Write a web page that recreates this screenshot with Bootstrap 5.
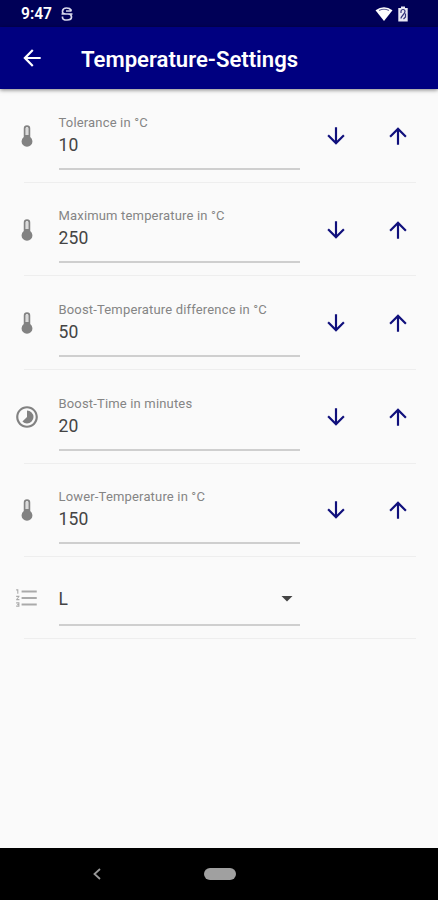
<!DOCTYPE html>
<html lang="en">
<head>
<meta charset="utf-8">
<meta name="viewport" content="width=device-width, initial-scale=1">
<title>Temperature-Settings</title>
<link href="https://cdn.jsdelivr.net/npm/bootstrap@5.3.0/dist/css/bootstrap.min.css" rel="stylesheet">
<style>
body{font-family:Roboto,sans-serif;background:#fafafa;height:900px;overflow:hidden}
svg{display:block;flex:none}
.status{height:27px;background:#000057;padding:0 29px 0 21px}
.clock{font-size:15.6px;font-weight:600;line-height:27px;width:31px;white-space:nowrap;padding-top:1px}
.appbar{height:62px;background:#000080;padding:0 19px;box-shadow:0 1px 4px rgba(0,0,0,.5);z-index:1}
.title{font-size:22.1px;font-weight:600;line-height:28px;margin-left:36px;padding-top:2px;white-space:nowrap}
main{padding-top:.3px}
.setting{height:93.6px;padding:0 22px 0 14px;background:linear-gradient(#eeeeee,#eeeeee) 24px 100%/392px 1px no-repeat}
.setting-short{height:82px}
.glyph{width:26px;height:26px;fill:#828282}
.glyph-list{fill:#aaa}
.field{width:241.5px;margin-left:18.5px;height:56px;border-bottom:2px solid #cfcfcf}
.field.mt-auto{margin-bottom:13px}
.choice{padding-right:7px}
.choice .value,.choice svg{margin-top:3px}
.caption-text{font-size:13px;line-height:16px;color:#858585;white-space:nowrap;padding-top:1px;letter-spacing:.17px}
.value{font-size:17.5px;line-height:22px;color:#444;padding-top:3px;letter-spacing:.2px}
.step{border:0;border-radius:0;fill:#10107c}
.step-down{margin-left:22.5px}
.step-up{margin-left:36.5px}
.navkeys{height:52px;background:#000}
.keyback{margin-left:92px}
.pill{width:32px;height:12px;background:#a0a0a0;margin-left:102px}
</style>
<script src="https://cdn.jsdelivr.net/npm/bootstrap@5.3.0/dist/js/bootstrap.bundle.min.js"></script>
</head>
<body class="d-flex flex-column m-0">
<svg width="0" height="0" class="d-none" aria-hidden="true">
<symbol id="thermo" viewBox="0 0 24 24"><path fill-rule="evenodd" d="M15 13V5a3 3 0 0 0-6 0v8a5 5 0 1 0 6 0zM10.800 11V5a1.200 1.200 0 0 1 2.400 0v6z"/><path fill="#dadada" d="M10.800 5a1.200 1.200 0 0 1 2.400 0v6h-2.400z"/></symbol>
<symbol id="down" viewBox="0 0 24 24"><path d="M20 12l-1.410-1.410L13 16.170V4h-2v12.170l-5.580-5.590L4 12l8 8 8-8z"/></symbol>
<symbol id="up" viewBox="0 0 24 24"><path d="M4 12l1.410 1.410L11 7.830V20h2V7.830l5.580 5.590L20 12l-8-8-8 8z"/></symbol>
</svg>

<div class="status d-flex align-items-center text-white">
  <div class="clock">9:47</div>
  <svg class="ms-2" width="14" height="14" viewBox="0 0 14 14" fill="none" stroke="#d8d8ec" stroke-width="1.700"><path d="M11 4V3Q10 1 6.500 1T2.500 4T6 7H8Q11.500 7 11.500 10T7 13T2.500 10.500V9.500M1.500 7H12.500M6 4H11.500"/></svg>
  <svg class="ms-auto" width="18" height="16" viewBox="0 0 18 16"><path fill="#fff" d="M.5 4.300Q9-2 17.500 4.300L9 15z"/><path d="M4 4.500Q9 2 14 4.500" fill="none" stroke="#66669a" stroke-width="1.200"/></svg>
  <svg class="ms-1" width="12" height="16" viewBox="0 0 12 16"><path fill="#e8e8f4" d="M4 .5h4V2h2.700v13.500H1.300V2H4z"/><path d="M4 7V5.500a2 2 0 0 1 4 0C8 8 4 10 4 12.500M8.500 7.500v3.500l-2 2" fill="none" stroke="#34347a" stroke-width="1.200"/></svg>
</div>

<header class="appbar d-flex align-items-center text-white position-relative">
  <svg width="26" height="26" viewBox="0 0 24 24" fill="#fff" role="img" aria-label="Back"><path d="M20 11H7.830l5.590-5.590L12 4l-8 8 8 8 1.410-1.410L7.830 13H20v-2z"/></svg>
  <h1 class="title mb-0">Temperature-Settings</h1>
</header>

<main class="flex-grow-1">
  <section class="setting d-flex align-items-center">
    <svg class="glyph"><use href="#thermo"/></svg>
    <div class="field mt-auto"><div class="caption-text">Tolerance in °C</div><div class="value">10</div></div>
    <button class="step step-down bg-transparent p-0" aria-label="Decrease"><svg width="26" height="26"><use href="#down"/></svg></button>
    <button class="step step-up bg-transparent p-0" aria-label="Increase"><svg width="26" height="26"><use href="#up"/></svg></button>
  </section>
  <section class="setting d-flex align-items-center">
    <svg class="glyph"><use href="#thermo"/></svg>
    <div class="field mt-auto"><div class="caption-text">Maximum temperature in °C</div><div class="value">250</div></div>
    <button class="step step-down bg-transparent p-0" aria-label="Decrease"><svg width="26" height="26"><use href="#down"/></svg></button>
    <button class="step step-up bg-transparent p-0" aria-label="Increase"><svg width="26" height="26"><use href="#up"/></svg></button>
  </section>
  <section class="setting d-flex align-items-center">
    <svg class="glyph"><use href="#thermo"/></svg>
    <div class="field mt-auto"><div class="caption-text">Boost-Temperature difference in °C</div><div class="value">50</div></div>
    <button class="step step-down bg-transparent p-0" aria-label="Decrease"><svg width="26" height="26"><use href="#down"/></svg></button>
    <button class="step step-up bg-transparent p-0" aria-label="Increase"><svg width="26" height="26"><use href="#up"/></svg></button>
  </section>
  <section class="setting d-flex align-items-center">
    <svg class="glyph" viewBox="0 0 24 24"><path d="M16.240 7.760A5.974 5.974 0 0 0 12 6v6l-4.240 4.240c2.340 2.340 6.140 2.340 8.490 0a5.990 5.990 0 0 0-.010-8.480zM12 2C6.480 2 2 6.480 2 12s4.480 10 10 10 10-4.480 10-10S17.520 2 12 2zm0 18c-4.420 0-8-3.580-8-8s3.580-8 8-8 8 3.580 8 8-3.580 8-8 8z"/></svg>
    <div class="field mt-auto"><div class="caption-text">Boost-Time in minutes</div><div class="value">20</div></div>
    <button class="step step-down bg-transparent p-0" aria-label="Decrease"><svg width="26" height="26"><use href="#down"/></svg></button>
    <button class="step step-up bg-transparent p-0" aria-label="Increase"><svg width="26" height="26"><use href="#up"/></svg></button>
  </section>
  <section class="setting d-flex align-items-center">
    <svg class="glyph"><use href="#thermo"/></svg>
    <div class="field mt-auto"><div class="caption-text">Lower-Temperature in °C</div><div class="value">150</div></div>
    <button class="step step-down bg-transparent p-0" aria-label="Decrease"><svg width="26" height="26"><use href="#down"/></svg></button>
    <button class="step step-up bg-transparent p-0" aria-label="Increase"><svg width="26" height="26"><use href="#up"/></svg></button>
  </section>
  <section class="setting setting-short d-flex align-items-center">
    <svg class="glyph glyph-list" viewBox="0 0 24 24"><path d="M2 17h2v.5H3v1h1v.5H2v1h3v-4H2v1zm1-9h1V4H2v1h1v3zm-1 3h1.800L2 13.100v.9h3v-1H3.200L5 10.900V10H2v1zm5-6v2h14V5H7zm0 14h14v-2H7v2zm0-6h14v-2H7v2z"/></svg>
    <div class="field choice d-flex align-items-center"><div class="value p-0">L</div><svg class="ms-auto" width="12" height="6" viewBox="0 0 12 6"><path d="M.5 0h11L6 5.500z" fill="#444"/></svg></div>
  </section>
</main>

<nav class="navkeys d-flex align-items-center">
  <svg class="keyback" width="10" height="12" viewBox="0 0 10 12" fill="none" stroke="#999" stroke-width="1.800"><path d="M8 1L2.500 6L8 11"/></svg>
  <div class="pill rounded-pill"></div>
</nav>
</body>
</html>
